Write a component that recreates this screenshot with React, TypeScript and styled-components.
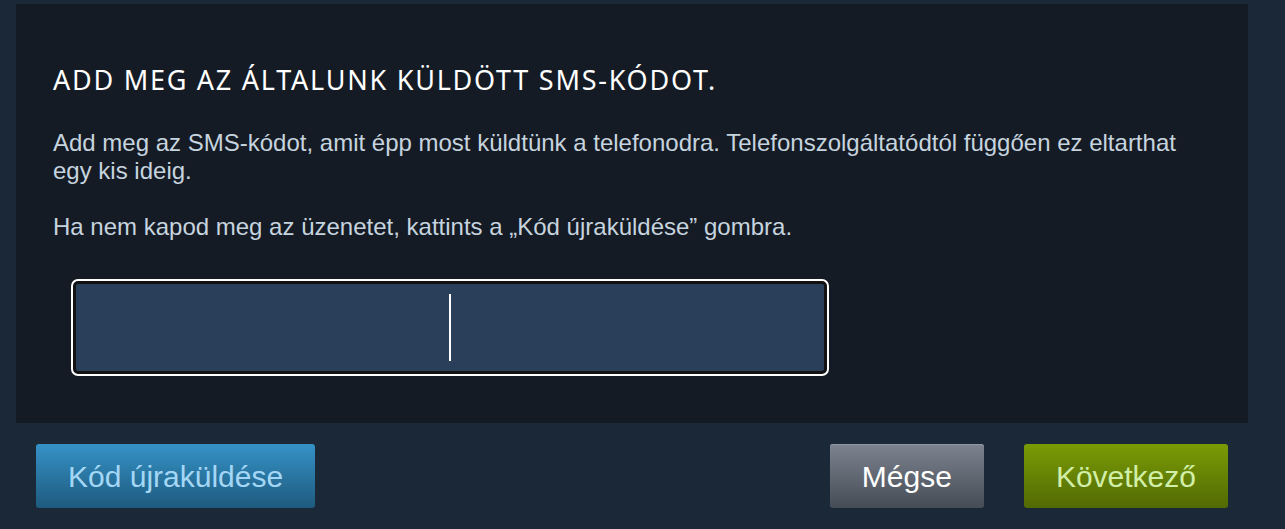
import styled, { createGlobalStyle } from 'styled-components';

const GlobalStyle = createGlobalStyle`
  html, body {
    margin: 0;
    padding: 0;
    background: #1b2838;
  }
`;

const StyledPage = styled.div`
  display: flex;
  flex-direction: column;

  width: 1285px;
  height: 529px;
  padding: 4px 37px 0 16px;
  box-sizing: border-box;

  background: #1b2838;
  font-family: 'Liberation Sans', Arial, sans-serif;
`;

const StyledPanel = styled.div`
  display: flex;
  flex-direction: column;

  height: 419px;
  padding: 60px 37px 0;
  box-sizing: border-box;

  background: #151b25;
`;

const StyledTitle = styled.h2`
  margin: 0 0 33px;

  font-family: 'Noto Sans', 'Open Sans', sans-serif;
  font-size: 27px;
  font-weight: 400;
  line-height: 32px;
  letter-spacing: 1.75px;
  color: #ffffff;
`;

const StyledText = styled.p`
  margin: 0 0 28px;

  font-size: 24px;
  line-height: 28px;
  color: #c6d4df;
`;

const StyledCodeBox = styled.div`
  display: flex;
  align-items: center;
  justify-content: center;

  width: 754px;
  height: 93px;
  margin: 12px 0 0 20px;
  box-sizing: border-box;

  background: #2a3f5a;
  border: 3px solid #121212;
  border-radius: 5px;
  outline: 2px solid #ffffff;
`;

const StyledCaret = styled.span`
  display: block;
  width: 2px;
  height: 67px;
  background: #ffffff;
`;

const StyledActions = styled.div`
  display: flex;
  align-items: center;
  gap: 40px;

  padding: 21px 20px 0;
`;

const StyledSpacer = styled.div`
  flex: 1;
`;

const tones = {
  blue: { from: '#3592c6', to: '#1e5a7e', color: '#a4d7f5', edge: 'transparent' },
  gray: { from: '#7d848f', to: '#464c56', color: '#ffffff', edge: '#8f96a0' },
  green: { from: '#7a9b05', to: '#526a04', color: '#d2efa9', edge: 'transparent' },
};

const StyledButton = styled.button<{ $tone: keyof typeof tones }>`
  height: 64px;
  padding: 1px 32px 0;

  border: none;
  border-radius: 3px;
  box-shadow: inset 0 1px 0 ${({ $tone }) => tones[$tone].edge};
  background: linear-gradient(
    to bottom,
    ${({ $tone }) => tones[$tone].from},
    ${({ $tone }) => tones[$tone].to}
  );

  font-family: 'Liberation Sans', Arial, sans-serif;
  font-size: 30px;
  color: ${({ $tone }) => tones[$tone].color};

  cursor: pointer;
`;

export default function App() {
  return (
    <StyledPage>
      <GlobalStyle />
      <StyledPanel>
        <StyledTitle>ADD MEG AZ ÁLTALUNK KÜLDÖTT SMS-KÓDOT.</StyledTitle>
        <StyledText>
          Add meg az SMS-kódot, amit épp most küldtünk a telefonodra.
          Telefonszolgáltatódtól függően ez eltarthat egy kis ideig.
        </StyledText>
        <StyledText>
          Ha nem kapod meg az üzenetet, kattints a „Kód újraküldése” gombra.
        </StyledText>
        <StyledCodeBox>
          <StyledCaret />
        </StyledCodeBox>
      </StyledPanel>
      <StyledActions>
        <StyledButton $tone="blue">Kód újraküldése</StyledButton>
        <StyledSpacer />
        <StyledButton $tone="gray">Mégse</StyledButton>
        <StyledButton $tone="green">Következő</StyledButton>
      </StyledActions>
    </StyledPage>
  );
}
